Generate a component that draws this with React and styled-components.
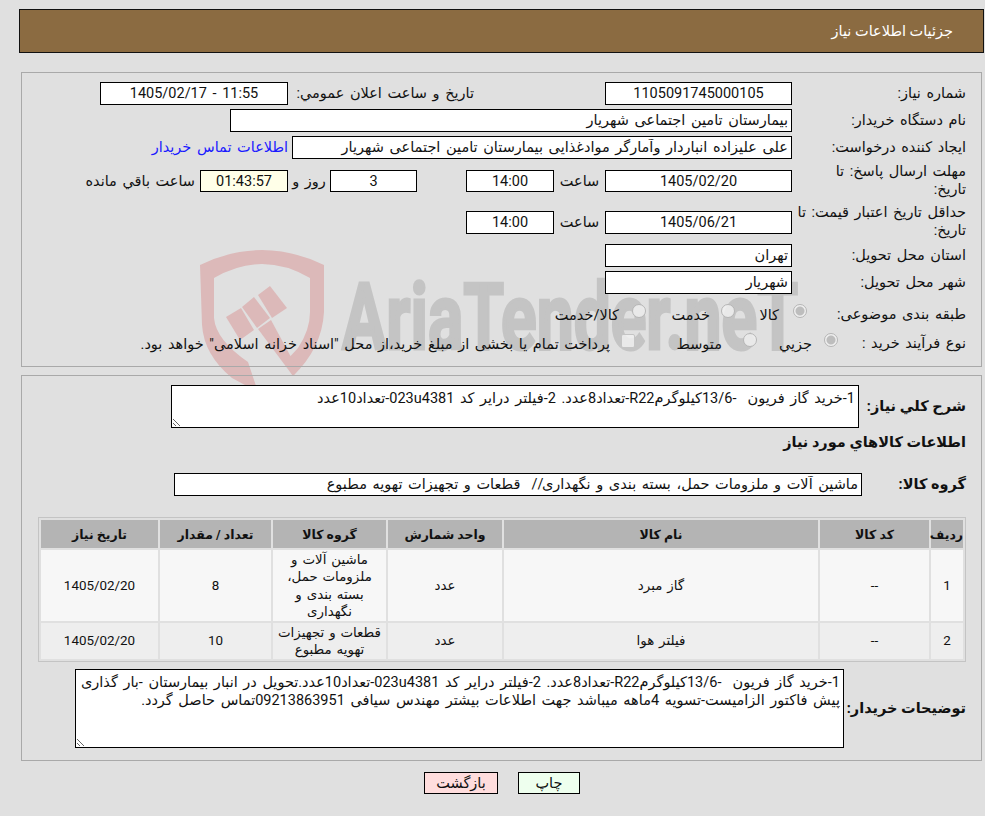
import React from "react"
import styled, { createGlobalStyle } from "styled-components"

const GlobalStyle = createGlobalStyle`
  html, body {
    margin: 0;
    padding: 0;
    background: #e0e0e0;
  }
  body {
    font-family: Roboto, "DejaVu Sans", sans-serif;
    font-size: 14.5px;
    word-spacing: 2px;
    color: #111;
  }
`

const Page = styled.div`
  position: relative;
  width: 985px;
  height: 816px;
  overflow: hidden;
  direction: rtl;
  padding-top: 9px;
  box-sizing: border-box;
`

const WatermarkArt = styled.svg`
  position: absolute;
  left: 0;
  top: 0;
  z-index: 0;
`

const Content = styled.div`
  position: relative;
  z-index: 1;
`

const Header = styled.div`
  height: 44px;
  margin: 0 1px 19px 19px;
  padding-right: 30px;
  box-sizing: border-box;
  display: flex;
  align-items: center;
  background: #8b6b41;
  border: 1px solid #111;
  color: #fff;
  word-spacing: 0;
`

const Panel = styled.div`
  margin: 0 3px ${(p) => p.$mb || 0}px 21px;
  padding: 9px 15px ${(p) => p.$pb}px 0;
  border: 1px solid #a9a9a9;
`

const Row = styled.div`
  display: flex;
  align-items: center;
  margin-top: ${(p) => p.$mt ?? 4}px;
  min-height: ${(p) => p.$h || 23}px;
`

const Label = styled.div`
  flex: none;
  width: ${(p) => p.$w || 174}px;
  box-sizing: border-box;
  line-height: 18px;
  white-space: nowrap;
`

const BoldLabel = styled(Label)`
  font-weight: bold;
  font-size: 14.5px;
  word-spacing: 0;
`

const Field = styled.input.attrs({ readOnly: true, type: "text" })`
  flex: none;
  width: ${(p) => p.$w}px;
  height: ${(p) => p.$h || 23}px;
  margin-right: ${(p) => p.$mr || 0}px;
  padding: 0 ${(p) => (p.$center ? 0 : 3)}px;
  box-sizing: border-box;
  border: 1px solid #000;
  border-radius: 0;
  outline: none;
  background: ${(p) => p.$bg || "#fff"};
  color: #111;
  font: inherit;
  word-spacing: inherit;
  text-align: ${(p) => (p.$center ? "center" : "right")};
`

const Caption = styled.span`
  flex: none;
  width: ${(p) => (p.$w ? `${p.$w}px` : "auto")};
  padding-right: ${(p) => p.$pr || 0}px;
  box-sizing: border-box;
  text-align: ${(p) => (p.$center ? "center" : "right")};
`

const ContactLink = styled.a`
  margin-right: 4px;
  color: #1a1aff;
  text-decoration: none;
`

const Choice = styled.label`
  flex: none;
  width: ${(p) => (p.$w ? `${p.$w}px` : "auto")};
  display: flex;
  align-items: center;
  gap: ${(p) => p.$gap ?? 8}px;
`

const Radio = styled.input.attrs({ type: "radio", disabled: true })`
  appearance: none;
  flex: none;
  width: 14px;
  height: 14px;
  margin: ${(p) => p.$lift || -8}px 0 0;
  box-sizing: border-box;
  border: 1px solid #b5b5b5;
  border-radius: 50%;
  background: ${(p) =>
    p.checked
      ? "radial-gradient(circle, #bdbdbd 0 4px, #efefef 5px)"
      : "rgba(240, 240, 240, 0.85)"};
`

const Check = styled.input.attrs({ type: "checkbox", disabled: true })`
  appearance: none;
  flex: none;
  width: 14px;
  height: 14px;
  margin: -7px 0 0;
  box-sizing: border-box;
  border: 1px solid #c4c4c4;
  border-radius: 2px;
  background: rgba(240, 240, 240, 0.85);
`

const Note = styled.textarea.attrs({ readOnly: true })`
  flex: none;
  display: block;
  width: ${(p) => p.$w}px;
  height: ${(p) => p.$h}px;
  margin: 0;
  padding: 4px 3px;
  box-sizing: border-box;
  border: 1px solid #000;
  border-radius: 0;
  outline: none;
  background: #fff;
  color: #111;
  font: inherit;
  word-spacing: inherit;
  line-height: 18px;
`

const Section = styled.div`
  margin-top: 5px;
  line-height: 20px;
  font-weight: bold;
  font-size: 14.5px;
  word-spacing: 0;
`

const ItemsTable = styled.table`
  width: 928px;
  margin-top: 21px;
  table-layout: fixed;
  border: 1px solid #c4c4c4;
  border-collapse: separate;
  border-spacing: 2px;
`

const HeadCell = styled.th`
  height: 28px;
  padding: 0;
  background: #b4b4b4;
  font-size: 12.5px;
  font-weight: bold;
  word-spacing: 0;
  text-align: center;
`

const Cell = styled.td`
  padding: 0;
  background: ${(p) => (p.$even ? "#eeeeee" : "#f7f7f7")};
  font-size: 13.4px;
  word-spacing: 1.5px;
  line-height: 17.5px;
  text-align: center;
`

const Actions = styled.div`
  display: flex;
  justify-content: center;
  gap: 20px;
  margin: 11px 0 0 19px;
`

const ActionButton = styled.button`
  width: ${(p) => p.$w}px;
  height: 22px;
  padding: 0;
  border: 1px solid #000;
  background: ${(p) => p.$bg};
  color: #111;
  font: inherit;
`

const columns = [32, 109, 314, 114, 113, 111, 117]

const heads = ["رديف", "کد کالا", "نام کالا", "واحد شمارش", "گروه کالا", "تعداد / مقدار", "تاریخ نیاز"]

const items = [
  ["1", "--", "گاز مبرد", "عدد", "ماشین آلات و ملزومات حمل، بسته بندی و نگهداری", "8", "1405/02/20", 71],
  ["2", "--", "فیلتر هوا", "عدد", "قطعات و تجهیزات تهویه مطبوع", "10", "1405/02/20", 36],
]

const summary =
  "1-خرید گاز فریون  -13/6کیلوگرمR22-تعداد8عدد. 2-فیلتر درایر کد 023u4381-تعداد10عدد"

const buyerNote =
  summary +
  ".تحویل در انبار بیمارستان -بار گذاری پیش فاکتور الزامیست-تسویه 4ماهه میباشد جهت اطلاعات بیشتر مهندس سیافی 09213863951تماس حاصل گردد."

function Watermark() {
  return (
    <WatermarkArt width="985" height="816" aria-hidden="true">
      <g fill="#dcb9b9">
        <path d="M200 265 Q262 235 324 265 L324 312 Q322 348 293 376 L285 362 L298 348 Q310 330 310 312 L310 278 Q262 250 214 278 L214 318 Q216 340 248 362 L258 392 L232 378 Q204 355 202 325 Z" />
        <polygon points="258,329 271,320 298,370 293,376" />
        <polygon points="226,317 241,308 254,330 240,340" />
        <polygon points="242,307 254,297 270,318 257,328" />
        <polygon points="258,295 270,286 287,308 272,318" />
      </g>
      <text
        x="342"
        y="349"
        textLength="456"
        lengthAdjust="spacingAndGlyphs"
        fill="#c4c4c4"
        stroke="#c4c4c4"
        strokeWidth="3"
        fontFamily="Roboto, sans-serif"
        fontWeight="bold"
        fontSize="92"
        style={{ direction: "ltr", unicodeBidi: "bidi-override", wordSpacing: 0 }}
      >
        AriaTender.neT
      </text>
    </WatermarkArt>
  )
}

export default function App() {
  return (
    <Page>
      <GlobalStyle />
      <Watermark />
      <Content>
        <Header>جزئیات اطلاعات نیاز</Header>

        <Panel $pb={11} $mb={8}>
          <Row $mt={0}>
            <Label>شماره نیاز:</Label>
            <Field $w={187} $center value="1105091745000105" />
            <Caption $w={317} $pr={131}>تاریخ و ساعت اعلان عمومي:</Caption>
            <Field $w={188} $center value="11:55 - 1405/02/17" />
          </Row>
          <Row>
            <Label>نام دستگاه خریدار:</Label>
            <Field $w={562} value="بیمارستان تامین اجتماعی شهریار" />
          </Row>
          <Row>
            <Label>ایجاد کننده درخواست:</Label>
            <Field $w={500} value="علی علیزاده انباردار وآمارگر موادغذایی بیمارستان تامین اجتماعی شهریار" />
            <ContactLink href="#">اطلاعات تماس خریدار</ContactLink>
          </Row>
          <Row $h={36}>
            <Label>مهلت ارسال پاسخ: تا<br />تاریخ:</Label>
            <Field $w={187} $h={22} $center value="1405/02/20" />
            <Caption $w={51} $center>ساعت</Caption>
            <Field $w={88} $h={22} $center value="14:00" />
            <Field $w={87} $h={22} $mr={49} $center value="3" />
            <Caption $w={42} $center>روز و</Caption>
            <Field $w={88} $h={22} $center $bg="#ffffe8" value="01:43:57" />
            <Caption $pr={5}>ساعت باقي مانده</Caption>
          </Row>
          <Row $mt={5} $h={36}>
            <Label>حداقل تاریخ اعتبار قیمت: تا<br />تاریخ:</Label>
            <Field $w={187} $center value="1405/06/21" />
            <Caption $w={51} $center>ساعت</Caption>
            <Field $w={88} $center value="14:00" />
          </Row>
          <Row>
            <Label>استان محل تحویل:</Label>
            <Field $w={187} value="تهران" />
          </Row>
          <Row>
            <Label>شهر محل تحویل:</Label>
            <Field $w={187} value="شهریار" />
          </Row>
          <Row $mt={10} $h={22}>
            <Label $w={159}>طبقه بندی موضوعی:</Label>
            <Choice $w={72} $gap={14}><Radio checked readOnly $lift={-9} />کالا</Choice>
            <Choice $w={89} $gap={11}><Radio readOnly $lift={-9} />خدمت</Choice>
            <Choice $gap={13}><Radio readOnly $lift={-9} />کالا/خدمت</Choice>
          </Row>
          <Row $mt={7} $h={22}>
            <Label $w={128}>نوع فرآیند خرید :</Label>
            <Choice $w={81} $gap={12}><Radio checked readOnly />جزيي</Choice>
            <Choice $w={122} $gap={21}><Radio readOnly />متوسط</Choice>
            <Choice $gap={11}><Check />پرداخت تمام یا بخشی از مبلغ خرید،از محل "اسناد خزانه اسلامی" خواهد بود.</Choice>
          </Row>
        </Panel>

        <Panel $pb={12}>
          <Row $mt={0}>
            <BoldLabel $w={107}>شرح کلي نياز:</BoldLabel>
            <Note $w={688} $h={43} value={summary} />
          </Row>
          <Section>اطلاعات کالاهاي مورد نياز</Section>
          <Row $mt={20}>
            <BoldLabel $w={104}>گروه کالا:</BoldLabel>
            <Field $w={688} value="ماشین آلات و ملزومات حمل، بسته بندی و نگهداری//  قطعات و تجهیزات تهویه مطبوع" />
          </Row>
          <ItemsTable>
            <colgroup>
              {columns.map((width, i) => (
                <col key={i} style={{ width }} />
              ))}
            </colgroup>
            <thead>
              <tr>
                {heads.map((head) => (
                  <HeadCell key={head}>{head}</HeadCell>
                ))}
              </tr>
            </thead>
            <tbody>
              {items.map((item, i) => (
                <tr key={item[0]} style={{ height: item[7] }}>
                  {item.slice(0, 7).map((text, j) => (
                    <Cell key={j} $even={i % 2 === 1}>{text}</Cell>
                  ))}
                </tr>
              ))}
            </tbody>
          </ItemsTable>
          <Row $mt={7}>
            <BoldLabel $w={122}>توضیحات خریدار:</BoldLabel>
            <Note $w={769} $h={79} value={buyerNote} />
          </Row>
        </Panel>

        <Actions>
          <ActionButton $w={62} $bg="#eeffee">چاپ</ActionButton>
          <ActionButton $w={74} $bg="#ffdddd">بازگشت</ActionButton>
        </Actions>
      </Content>
    </Page>
  )
}
